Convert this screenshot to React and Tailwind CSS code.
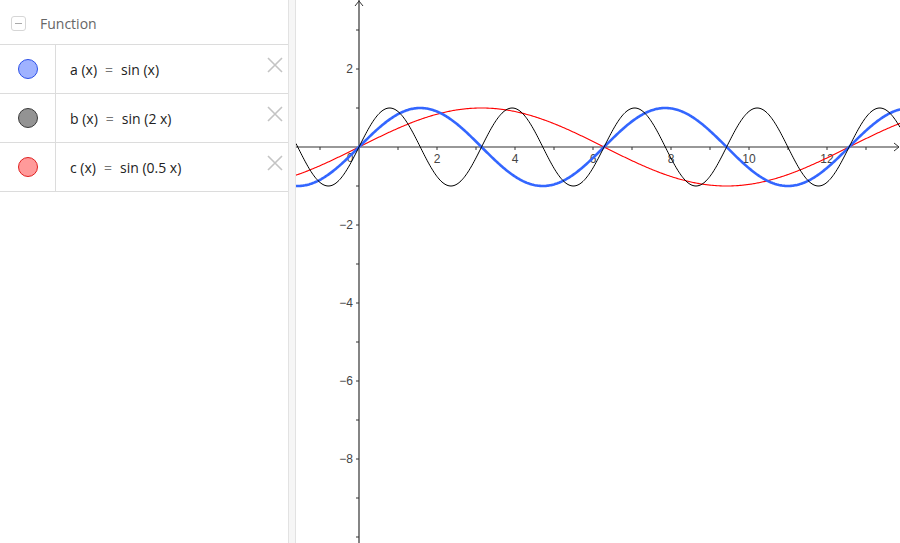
import React from 'react';

const OX = 63; // origin in svg coords (359 - 296)
const OY = 147;
const S = 39;
const W = 604;
const H = 543;

function curve(fn) {
  const pts = [];
  for (let px = 0; px <= W; px += 1) {
    const x = (px - OX) / S;
    const y = OY - fn(x) * S;
    pts.push(`${px},${y.toFixed(2)}`);
  }
  return 'M' + pts.join(' L');
}

const rows = [
  { name: 'a', body: 'sin (x)', fill: 'bg-[#9fb2ff]', border: 'border-[#2c50e8]' },
  { name: 'b', body: 'sin (2 x)', fill: 'bg-[#939393]', border: 'border-[#3a3a3a]' },
  { name: 'c', body: 'sin (0.5 x)', fill: 'bg-[#ff9a9a]', border: 'border-[#e02020]' },
];

function Row({ name, body, fill, border }) {
  return (
    <div className="flex h-[49px] border-b border-[#dcdcdc]">
      <div className="w-[56px] flex items-center justify-center border-r border-[#dcdcdc]">
        <div className={`w-[20px] h-[20px] rounded-full border ${fill} ${border}`} />
      </div>
      <div className="flex-1 flex items-center pl-[14px] text-[14px] text-[#222]">
        <span>{name} (x)</span>
        <span className="mx-[8px] text-[#777]">=</span>
        <span>{body}</span>
      </div>
      <div className="w-[30px] flex items-center justify-end pr-[5px]">
        <svg width="16" height="16" viewBox="0 0 16 16" className="-mt-[9px]">
          <path d="M1 1 L15 15 M15 1 L1 15" stroke="#c4c4c4" strokeWidth="1.6" />
        </svg>
      </div>
    </div>
  );
}

function Graph() {
  const xTicks = [];
  for (let i = -1; i <= 13; i++) xTicks.push(i);
  const yTicks = [];
  for (let i = 3; i >= -10; i--) yTicks.push(i);
  return (
    <svg width={W} height={H} viewBox={`0 0 ${W} ${H}`} className="block">
      {/* axes */}
      <line x1="0" y1={OY} x2={W - 1} y2={OY} stroke="#333" strokeWidth="1.2" />
      <path d={`M${W - 6} ${OY - 4} L${W - 1} ${OY} L${W - 6} ${OY + 4}`} fill="none" stroke="#333" strokeWidth="1" />
      <line x1={OX} y1="0" x2={OX} y2={H} stroke="#333" strokeWidth="1.2" />
      <path d={`M${OX - 4} 6 L${OX} 1 L${OX + 4} 6`} fill="none" stroke="#333" strokeWidth="1" />
      {xTicks.map((i) =>
        i === 0 ? null : (
          <line key={i} x1={OX + i * S} y1={OY} x2={OX + i * S} y2={OY + 3} stroke="#333" strokeWidth="1" />
        )
      )}
      {yTicks.map((i) =>
        i === 0 ? null : (
          <line key={i} x1={OX - 3} y1={OY - i * S} x2={OX} y2={OY - i * S} stroke="#333" strokeWidth="1" />
        )
      )}
      {[2, 4, 6, 8, 10, 12].map((i) => (
        <text key={i} x={OX + i * S} y={OY + 16} textAnchor="middle" fontSize="12" fill="#444" fontFamily="Liberation Sans, Arial, sans-serif">
          {i}
        </text>
      ))}
      <text x={OX - 9} y={OY + 15} textAnchor="middle" fontSize="12" fill="#444" fontFamily="Liberation Sans, Arial, sans-serif">0</text>
      {[2, -2, -4, -6, -8].map((i) => (
        <text key={i} x={OX - 6} y={OY - i * S + 4} textAnchor="end" fontSize="12" fill="#444" fontFamily="Liberation Sans, Arial, sans-serif">
          {i < 0 ? `\u2212${-i}` : i}
        </text>
      ))}
      {/* curves */}
      <path d={curve((x) => Math.sin(0.5 * x))} fill="none" stroke="#ff0000" strokeWidth="1.1" />
      <path d={curve((x) => Math.sin(x))} fill="none" stroke="#3366ff" strokeWidth="2.6" />
      <path d={curve((x) => Math.sin(2 * x))} fill="none" stroke="#000" strokeWidth="1" />
    </svg>
  );
}

export default function App() {
  return (
    <div className="w-[900px] h-[543px] flex bg-white overflow-hidden" style={{ fontFamily: '"Open Sans", "Noto Sans", sans-serif' }}>
      {/* Algebra view */}
      <div className="w-[288px] shrink-0 flex flex-col">
        <div className="h-[45px] flex items-center border-b border-[#dcdcdc] pl-[11px] pt-[3px]">
          <div className="w-[15px] h-[15px] rounded-[3px] border border-[#d6d6d6] flex items-center justify-center">
            <div className="w-[7px] h-[1px] bg-[#aaa]" />
          </div>
          <span className="ml-[14px] text-[14px] text-[#666]">Function</span>
        </div>
        {rows.map((r) => (
          <Row key={r.name} {...r} />
        ))}
      </div>
      {/* splitter */}
      <div className="w-[8px] shrink-0 bg-[#f6f6f6] border-l border-r border-[#e2e2e2]" />
      {/* graphics view */}
      <div className="flex-1">
        <Graph />
      </div>
    </div>
  );
}
